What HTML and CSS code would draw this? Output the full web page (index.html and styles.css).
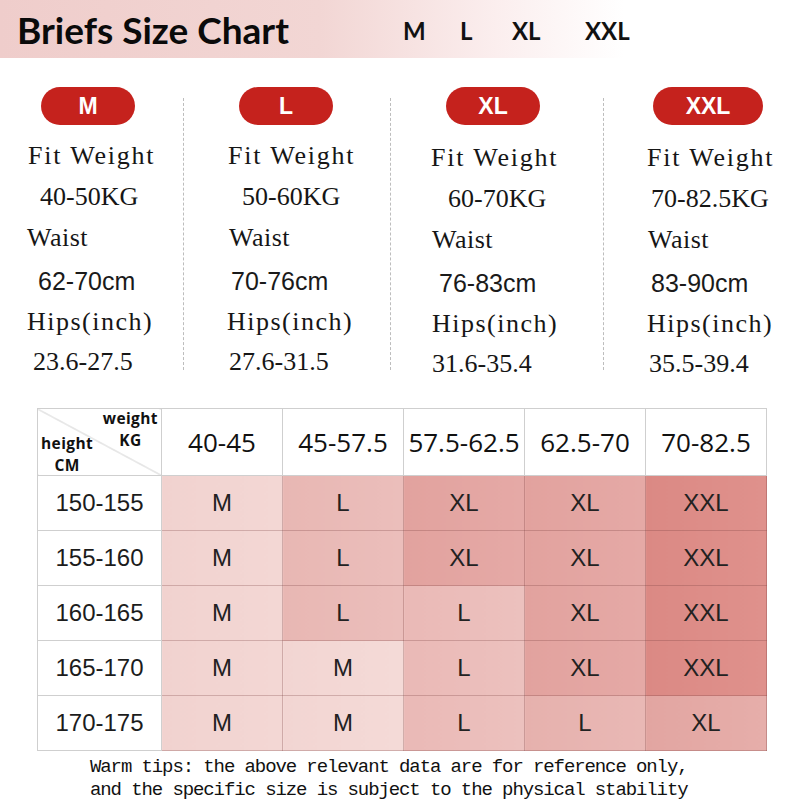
FILE: index.html
```html
<!DOCTYPE html>
<html lang="en">
<head>
<meta charset="utf-8">
<title>Briefs Size Chart</title>
<link rel="stylesheet" href="styles.css">
</head>
<body>
<div class="page">
  <header class="topbar">
    <h1 class="title">Briefs Size Chart</h1>
    <div class="size-tags">
      <span>M</span><span>L</span><span>XL</span><span>XXL</span>
    </div>
  </header>

  <section class="specs">
    <div class="spec spec-m">
      <div class="pill">M</div>
      <div class="lbl lbl-fw">Fit Weight</div>
      <div class="lbl v-kg">40-50KG</div>
      <div class="lbl lbl-w">Waist</div>
      <div class="v-cm">62-70cm</div>
      <div class="lbl lbl-h">Hips(inch)</div>
      <div class="lbl v-in">23.6-27.5</div>
    </div>
    <div class="divider"></div>
    <div class="spec spec-l">
      <div class="pill">L</div>
      <div class="lbl lbl-fw">Fit Weight</div>
      <div class="lbl v-kg">50-60KG</div>
      <div class="lbl lbl-w">Waist</div>
      <div class="v-cm">70-76cm</div>
      <div class="lbl lbl-h">Hips(inch)</div>
      <div class="lbl v-in">27.6-31.5</div>
    </div>
    <div class="divider"></div>
    <div class="spec spec-xl">
      <div class="pill">XL</div>
      <div class="lbl lbl-fw">Fit Weight</div>
      <div class="lbl v-kg">60-70KG</div>
      <div class="lbl lbl-w">Waist</div>
      <div class="v-cm">76-83cm</div>
      <div class="lbl lbl-h">Hips(inch)</div>
      <div class="lbl v-in">31.6-35.4</div>
    </div>
    <div class="divider"></div>
    <div class="spec spec-xxl">
      <div class="pill pill-wide">XXL</div>
      <div class="lbl lbl-fw">Fit Weight</div>
      <div class="lbl v-kg">70-82.5KG</div>
      <div class="lbl lbl-w">Waist</div>
      <div class="v-cm">83-90cm</div>
      <div class="lbl lbl-h">Hips(inch)</div>
      <div class="lbl v-in">35.5-39.4</div>
    </div>
  </section>

  <table class="chart">
    <colgroup>
      <col class="c-first"><col class="c-w"><col class="c-w"><col class="c-w"><col class="c-w"><col class="c-w">
    </colgroup>
    <thead>
      <tr class="head-row">
        <th class="corner">
          <div class="corner-grid">
            <div class="corner-top">weight<br>KG</div>
            <div class="corner-bot">height<br>CM</div>
          </div>
        </th>
        <th>40-45</th>
        <th>45-57.5</th>
        <th>57.5-62.5</th>
        <th>62.5-70</th>
        <th>70-82.5</th>
      </tr>
    </thead>
    <tbody>
      <tr>
        <td class="h">150-155</td>
        <td class="m1">M</td><td class="l1">L</td><td class="xl">XL</td><td class="xl">XL</td><td class="xxl">XXL</td>
      </tr>
      <tr>
        <td class="h">155-160</td>
        <td class="m1">M</td><td class="l1">L</td><td class="xl">XL</td><td class="xl">XL</td><td class="xxl">XXL</td>
      </tr>
      <tr>
        <td class="h">160-165</td>
        <td class="m1">M</td><td class="l1">L</td><td class="l2">L</td><td class="xl">XL</td><td class="xxl">XXL</td>
      </tr>
      <tr>
        <td class="h">165-170</td>
        <td class="m1">M</td><td class="m2">M</td><td class="l2">L</td><td class="xl">XL</td><td class="xxl">XXL</td>
      </tr>
      <tr>
        <td class="h">170-175</td>
        <td class="m1">M</td><td class="m2">M</td><td class="l2">L</td><td class="l3">L</td><td class="xl2">XL</td>
      </tr>
    </tbody>
  </table>

  <p class="tips">Warm tips: the above relevant data are for reference only,<br>and the specific size is subject to the physical stability</p>
</div>
</body>
</html>
```

FILE: styles.css
```css
* { box-sizing: border-box; }

html, body {
  margin: 0;
  padding: 0;
  background: #ffffff;
}

.page {
  width: 800px;
  height: 800px;
  overflow: hidden;
  background: #ffffff;
  color: #111;
}

/* ---------- top bar ---------- */
.topbar {
  height: 58px;
  display: flex;
  align-items: center;
  background: linear-gradient(to right, #efcdcb 0%, #f2d6d4 40%, #fbeeee 62%, #ffffff 78%);
}

.title {
  margin: 0 0 0 17px;
  width: 386px;
  font-family: Lato, "Open Sans", sans-serif;
  font-weight: 700;
  font-size: 37px;
  line-height: 1;
  color: #0a0a0a;
  padding-top: 1px;
}

.size-tags {
  display: grid;
  grid-template-columns: 57px 52px 73px auto;
  font-family: Lato, "Open Sans", sans-serif;
  font-weight: 700;
  font-size: 24px;
  color: #111;
  padding-top: 2px;
}

/* ---------- spec columns ---------- */
.specs {
  display: grid;
  grid-template-columns: 183px 1px 206px 1px 212px 1px 196px;
  padding-top: 29px;
  height: 350px;
}

.divider {
  margin-top: 11px;
  height: 272px;
  border-left: 1px dashed #bdbdbd;
}

.spec {
  display: flex;
  flex-direction: column;
  align-items: flex-start;
}

.pill {
  width: 94px;
  height: 38px;
  border-radius: 19px;
  background: #c5221d;
  color: #fff;
  font-family: "Liberation Sans", Arial, sans-serif;
  font-weight: 700;
  font-size: 23px;
  display: flex;
  align-items: center;
  justify-content: center;
  margin-bottom: 11px;
}
.pill-wide { width: 110px; }

.lbl {
  font-family: "Liberation Serif", "Times New Roman", serif;
  font-size: 26px;
  color: #161616;
  white-space: nowrap;
}
.lbl-fw { line-height: 40px; letter-spacing: 1.8px; }
.v-kg { line-height: 41px; }
.lbl-w { line-height: 42px; letter-spacing: 0.5px; }
.v-cm {
  font-family: "Liberation Sans", Arial, sans-serif;
  font-size: 25px;
  line-height: 44px;
  color: #1a1a1a;
}
.lbl-h { line-height: 38px; letter-spacing: 1.5px; }
.v-in { line-height: 41px; }

/* column offsets */
.spec-m { padding-left: 27px; }
.spec-m .pill { margin-left: 14px; }
.spec-m .lbl-fw { padding-left: 1px; }
.spec-m .v-kg { padding-left: 13px; }
.spec-m .v-cm { padding-left: 11px; }
.spec-m .v-in { padding-left: 6px; }

.spec-l { padding-left: 43px; }
.spec-l .pill { margin-left: 12px; }
.spec-l .lbl-fw { padding-left: 1px; }
.spec-l .v-kg { padding-left: 15px; }
.spec-l .lbl-w { padding-left: 2px; }
.spec-l .v-cm { padding-left: 4px; }
.spec-l .v-in { padding-left: 2px; }

.spec-xl { padding-left: 40px; }
.spec-xl .pill { margin-left: 15px; margin-bottom: 13px; }
.spec-xl .v-kg { padding-left: 17px; }
.spec-xl .lbl-w { padding-left: 1px; }
.spec-xl .v-cm { padding-left: 8px; }
.spec-xl .lbl-h { padding-left: 1px; }
.spec-xl .v-in { padding-left: 1px; }

.spec-xxl { padding-left: 43px; }
.spec-xxl .pill { margin-left: 6px; margin-bottom: 13px; }
.spec-xxl .v-kg { padding-left: 4px; }
.spec-xxl .lbl-w { padding-left: 1px; }
.spec-xxl .v-cm { padding-left: 4px; }
.spec-xxl .v-in { padding-left: 2px; }

/* ---------- chart table ---------- */
.chart {
  margin: 0 0 0 37px;
  width: 729px;
  table-layout: fixed;
  border-collapse: collapse;
  border: 1px solid #c9c9c9;
}
.c-first { width: 124px; }
.c-w { width: 121px; }

.chart th, .chart td {
  border: 1px solid #cfcfcf;
  padding: 0;
  text-align: center;
  vertical-align: middle;
}

.head-row { height: 67px; }
.head-row th {
  font-family: "Open Sans", sans-serif;
  font-weight: 400;
  font-size: 26px;
  color: #111;
  background: #fff;
  white-space: nowrap;
}

.chart th.corner {
  background: linear-gradient(to top right, transparent calc(50% - 0.7px), #c4c4c4 50%, transparent calc(50% + 0.7px));
}
.corner-grid {
  display: grid;
  height: 66px;
}
.corner-top, .corner-bot {
  grid-area: 1 / 1;
  font-family: "Open Sans", sans-serif;
  font-weight: 700;
  font-size: 15.5px;
  line-height: 22px;
  letter-spacing: 0.4px;
  color: #111;
  text-align: center;
}
.corner-top {
  justify-self: end;
  align-self: start;
  padding-right: 3px;
  margin-top: -2px;
}
.corner-bot {
  justify-self: start;
  align-self: end;
  padding-left: 3px;
  margin-bottom: -1px;
}

.chart tbody tr { height: 55px; }
.chart td {
  font-family: "Liberation Sans", Arial, sans-serif;
  font-size: 24px;
  color: #222;
  border-color: rgba(120, 60, 60, 0.28);
}
.chart td.h {
  background: #fff;
  color: #1c1c1c;
  border-color: #cfcfcf;
}

.m1 { background: linear-gradient(to right, #f1d2cf, #f3d7d4); }
.m2 { background: linear-gradient(to right, #f2d5d2, #f4dad7); }
.l1 { background: linear-gradient(to right, #e8b7b3, #ebbebb); }
.l2 { background: linear-gradient(to right, #eab9b6, #ecc1be); }
.l3 { background: linear-gradient(to right, #e6b1ad, #e9b8b5); }
.xl { background: linear-gradient(to right, #e2a29e, #e5a9a6); }
.xl2 { background: linear-gradient(to right, #e2a5a1, #e6aeaa); }
.xxl { background: linear-gradient(to right, #db8984, #df918c); }

/* ---------- tips ---------- */
.tips {
  margin: 5px 0 0 90px;
  font-family: "Liberation Mono", "DejaVu Sans Mono", monospace;
  font-size: 19px;
  letter-spacing: -1.1px;
  line-height: 23px;
  color: #111;
  white-space: nowrap;
}
```
